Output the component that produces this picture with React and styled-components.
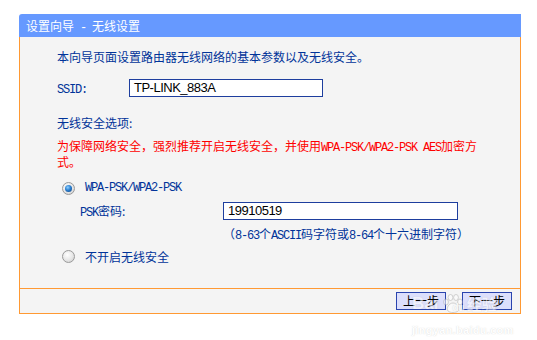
import React from 'react'
import styled, { createGlobalStyle } from 'styled-components'

const GlobalStyle = createGlobalStyle`
  body {
    margin: 0;
    background: #FFFFFF;
    font-family: "Noto Sans CJK SC", "Liberation Sans", sans-serif;
  }
`

const Page = styled.div`
  position: relative;
  width: 537px;
  height: 340px;
  padding: 14px 0 0 19px;
  box-sizing: border-box;
`
const Panel = styled.div`
  width: 502px;
`
const Header = styled.div`
  height: 23px;
  background: #6699FF;
  border-top-left-radius: 3px;
  color: #FFFFFF;
  font-size: 12px;
  line-height: 23px;
  padding-left: 7px;
  white-space: pre;
`
const Body = styled.div`
  background: #F4F4F4;
  border: 1px solid #FF9933;
  border-top: none;
  padding: 12px 0 24px 37px;
  display: flex;
  flex-direction: column;
  font-size: 12px;
  color: #003399;
`
const Text = styled.div`
  line-height: 16px;
  height: 16px;
  margin-top: ${p => p.$top || 0}px;
  padding-left: ${p => p.$indent || 0}px;
`
const Warning = styled.div`
  width: 426px;
  margin-top: 7px;
  color: #FF0000;
  line-height: 15px;
`
const Latin = styled.span`
  font-family: "Liberation Mono", monospace;
  font-size: 12px;
  letter-spacing: -1.2px;
  line-height: 1;
`
const FieldRow = styled.div`
  display: flex;
  align-items: center;
  height: 18px;
  margin-top: ${p => p.$top}px;
  padding-left: ${p => p.$indent || 0}px;
`
const Label = styled.div`
  width: ${p => p.$width}px;
  line-height: 16px;
`
const Field = styled.div`
  box-sizing: border-box;
  width: ${p => p.$width}px;
  height: 18px;
  border: 1px solid #1E3E9E;
  background: #FFFFFF;
  color: #000000;
  font-family: "Liberation Sans", Arial, sans-serif;
  font-size: 13px;
  letter-spacing: -0.5px;
  line-height: 16px;
  padding-left: ${p => p.$pad}px;
`
const RadioRow = styled.div`
  display: flex;
  align-items: center;
  height: 16px;
  margin-top: ${p => p.$top}px;
  padding-left: 5px;
  gap: 10px;
`
const Radio = styled.span`
  position: relative;
  width: 11px;
  height: 11px;
  border-radius: 50%;
  border: 1px solid #9A9A9A;
  background: radial-gradient(circle at 40% 35%, #FFFFFF 0%, #E6E6E6 55%, #C8C8C8 100%);
  box-sizing: content-box;

  &::after {
    content: '';
    display: ${p => (p.$checked ? 'block' : 'none')};
    position: absolute;
    left: 2px;
    top: 2px;
    width: 7px;
    height: 7px;
    border-radius: 50%;
    background: radial-gradient(circle at 40% 35%, #8FD0FF 0%, #2A7FD0 45%, #0B3C7A 100%);
  }
`
const Footer = styled.div`
  height: 24px;
  background: #F4F4F4;
  border: 1px solid #FF9933;
  border-top: none;
  display: flex;
  align-items: center;
  justify-content: flex-end;
  gap: 16px;
  padding-right: 8px;
`
const Button = styled.div`
  box-sizing: border-box;
  width: 50px;
  height: 18px;
  border: 1px solid #2A44AE;
  background: #DCDFFC;
  color: #000000;
  font-size: 12px;
  line-height: 16px;
  text-align: center;
`
const Watermark = styled.div`
  position: absolute;
  left: 412px;
  top: 290px;
  display: flex;
  flex-direction: column;
  align-items: flex-start;
  pointer-events: none;
  opacity: 0.55;
  color: #FFFFFF;
  text-shadow: 0 0 1px rgba(140, 140, 140, 0.7);
  font-family: "Liberation Sans", Arial, sans-serif;
`
const MarkTop = styled.div`
  display: flex;
  align-items: center;
  font-size: 17px;
  font-weight: bold;
  line-height: 20px;
`
const MarkCjk = styled.span`
  font-family: "Noto Sans CJK SC", sans-serif;
  font-size: 15px;
  margin-left: 2px;
`
const MarkSmall = styled.span`
  font-size: 10px;
  margin-left: -12px;
  margin-top: 8px;
`
const MarkUrl = styled.div`
  margin-top: 6px;
  font-size: 11px;
  font-weight: bold;
  letter-spacing: 0.3px;
`

const Paw = () => (
  <svg width="22" height="20" viewBox="0 0 22 20" style={{ marginLeft: 4 }}>
    <g fill="#FFFFFF" stroke="#A0A0A0" strokeWidth="0.8">
      <ellipse cx="4" cy="8" rx="2.4" ry="3" />
      <ellipse cx="8.5" cy="3.5" rx="2.4" ry="3" />
      <ellipse cx="14" cy="3.5" rx="2.4" ry="3" />
      <ellipse cx="18" cy="8" rx="2.4" ry="3" />
      <path d="M11 9 C7 9 4 14 6 17 C8 19 14 19 16 17 C18 14 15 9 11 9 Z" />
    </g>
  </svg>
)

const App = () => (
  <Page>
    <GlobalStyle />
    <Panel>
      <Header>设置向导<Latin> - </Latin>无线设置</Header>
      <Body>
        <Text>本向导页面设置路由器无线网络的基本参数以及无线安全。</Text>
        <FieldRow $top={14}>
          <Label $width={72}><Latin>SSID:</Latin></Label>
          <Field $width={194} $pad={4}>TP-LINK_883A</Field>
        </FieldRow>
        <Text $top={18}>无线安全选项:</Text>
        <Warning>
          为保障网络安全，强烈推荐开启无线安全，并使用<Latin>WPA-PSK/WPA2-PSK AES</Latin>加密方式。
        </Warning>
        <RadioRow $top={11}>
          <Radio $checked />
          <Latin>WPA-PSK/WPA2-PSK</Latin>
        </RadioRow>
        <FieldRow $top={6} $indent={23}>
          <Label $width={143}><Latin>PSK</Latin>密码:</Label>
          <Field $width={235} $pad={4}>19910519</Field>
        </FieldRow>
        <Text $top={6} $indent={166}>
          （<Latin>8-63</Latin>个<Latin>ASCII</Latin>码字符或<Latin>8-64</Latin>个十六进制字符）
        </Text>
        <RadioRow $top={6}>
          <Radio />
          <span>不开启无线安全</span>
        </RadioRow>
      </Body>
      <Footer>
        <Button>上一步</Button>
        <Button>下一步</Button>
      </Footer>
    </Panel>
    <Watermark>
      <MarkTop>
        Bai
        <Paw />
        <MarkSmall>du</MarkSmall>
        <MarkCjk>经验</MarkCjk>
      </MarkTop>
      <MarkUrl>jingyan.baidu.com</MarkUrl>
    </Watermark>
  </Page>
)

export default App
